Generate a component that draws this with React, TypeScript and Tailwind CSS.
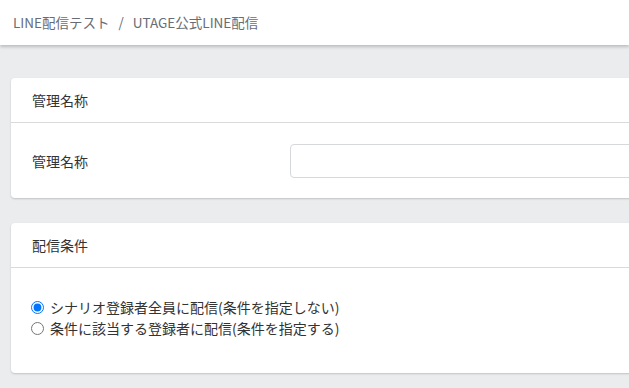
import React from 'react';

/** Карточка формы: заголовок + тело. */
function Card({ title, children }: { title: string; children: React.ReactNode }) {
  return (
    <section className="rounded-[4px] bg-white shadow-[0_1px_2px_rgba(0,0,0,0.18)]">
      <div className="flex h-[45px] items-center border-b border-[#d9dadc] px-[21px] text-[14px] text-[#333]">
        {title}
      </div>
      {children}
    </section>
  );
}

export default function App() {
  return (
    <div
      className="min-h-[388px] w-[629px] overflow-hidden bg-[#ebecee]"
      style={{ fontFamily: '"Noto Sans CJK JP", "Noto Sans", sans-serif' }}
    >
      {/* Хлебные крошки */}
      <header className="relative z-10 flex h-[45px] items-center bg-white px-[13px] text-[13.5px] text-[#666d76] shadow-[0_2px_3px_rgba(0,0,0,0.2)]">
        <span>LINE配信テスト</span>
        <span className="mx-[9px]">/</span>
        <span>UTAGE公式LINE配信</span>
      </header>

      <main className="flex w-[900px] flex-col gap-[25px] px-[11px] pt-[33px]">
        <Card title="管理名称">
          <div className="flex items-center px-[21px] pb-[20px] pt-[21px]">
            <label className="w-[258px] text-[14px] text-[#333]">管理名称</label>
            <input
              type="text"
              className="h-[34px] flex-1 rounded-[4px] border border-[#d6d8db] bg-white px-3 text-[14px] outline-none"
            />
          </div>
        </Card>

        <Card title="配信条件">
          <div className="flex flex-col px-[20px] pb-[34px] pt-[29px] text-[14px] text-[#333]">
            <label className="flex h-[21px] items-center gap-[6px]">
              <input type="radio" name="cond" defaultChecked className="m-0 h-[13px] w-[13px]" />
              <span>シナリオ登録者全員に配信(条件を指定しない)</span>
            </label>
            <label className="flex h-[21px] items-center gap-[6px]">
              <input type="radio" name="cond" className="m-0 h-[13px] w-[13px]" />
              <span>条件に該当する登録者に配信(条件を指定する)</span>
            </label>
          </div>
        </Card>
      </main>
    </div>
  );
}
